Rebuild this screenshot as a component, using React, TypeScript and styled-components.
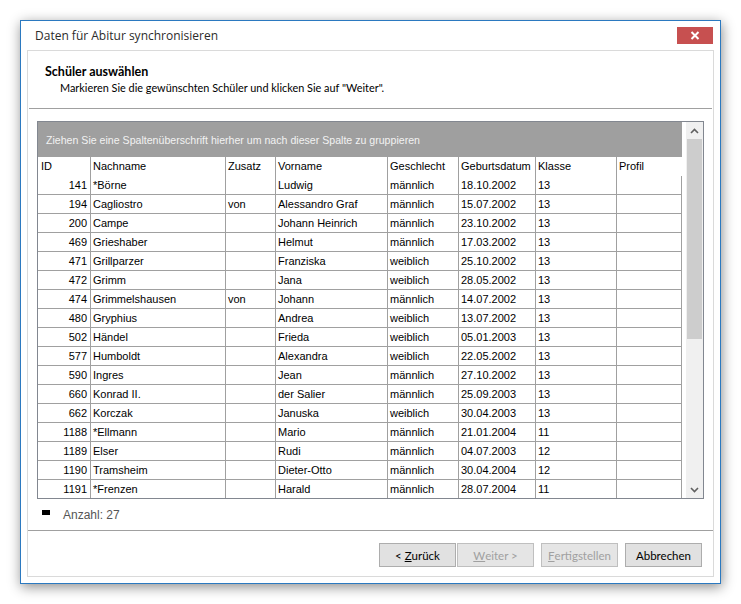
import React from "react";
import styled, { createGlobalStyle } from "styled-components";

const Global = createGlobalStyle`
  html, body { margin: 0; padding: 0; background: #ffffff; }
  body { width: 741px; height: 604px; overflow: hidden; }
`;

const UI = `"Open Sans", "Noto Sans", sans-serif`;
const UI2 = `Lato, "Open Sans", sans-serif`;
const GRIDFONT = `"Liberation Sans", Arial, sans-serif`;

const Page = styled.div`
  padding: 20px 0 0 20px;
`;

const Window = styled.div`
  width: 701px;
  height: 564px;
  box-sizing: border-box;
  border: 1px solid #2b79c0;
  background: #ffffff;
  box-shadow: 1px 3px 12px rgba(0, 0, 0, 0.45);
  display: flex;
  flex-direction: column;
`;

const TitleBar = styled.div`
  height: 29px;
  display: flex;
  align-items: center;
  justify-content: space-between;
  padding: 0 7px 0 14px;
`;

const Title = styled.div`
  font-family: ${UI};
  font-size: 12px;
  color: #2b2b2b;
`;

const CloseButton = styled.div`
  width: 36px;
  height: 17px;
  margin-top: -1px;
  background: #c75050;
  display: flex;
  align-items: center;
  justify-content: center;
`;

const Panel = styled.div`
  margin: 0 6px;
  height: 527px;
  box-sizing: border-box;
  border: 1px solid #dadada;
  display: flex;
  flex-direction: column;
`;

const HeaderArea = styled.div`
  height: 57px;
  box-sizing: border-box;
  padding: 13px 0 0 17px;
`;

const StepTitle = styled.div`
  font-family: ${UI2};
  font-size: 12.5px;
  font-weight: 700;
  line-height: 16px;
  color: #000;
`;

const StepHint = styled.div`
  font-family: ${UI2};
  font-size: 10.9px;
  line-height: 16px;
  color: #000;
  padding-left: 15px;
`;

const Separator = styled.div<{ $inset?: number }>`
  height: 1px;
  background: #a0a0a0;
  margin: 0 ${(p) => p.$inset ?? 0}px;
`;

const GridBox = styled.div`
  margin: 12px 9px 0 9px;
  height: 378px;
  box-sizing: border-box;
  border: 1px solid #828790;
  display: flex;
  overflow: hidden;
`;

const GridMain = styled.div`
  flex: 1;
  display: flex;
  flex-direction: column;
  overflow: hidden;
`;

const GroupPanel = styled.div`
  height: 35px;
  flex: none;
  background: #9f9f9f;
  color: #f2f2f2;
  font-family: ${GRIDFONT};
  font-size: 10.6px;
  display: flex;
  align-items: center;
  padding-left: 8px;
  width: 648px;
`;

const COLS = "53px 135px 50px 112px 71px 77px 81px 65px";

const Row = styled.div<{ $header?: boolean }>`
  display: grid;
  grid-template-columns: ${COLS};
  height: 19px;
  flex: none;
  box-sizing: border-box;
  border-bottom: ${(p) => (p.$header ? "none" : "1px solid #a0a0a0")};
  width: 644px;
`;

const Cell = styled.div<{ $right?: boolean; $last?: boolean; $header?: boolean }>`
  font-family: ${GRIDFONT};
  font-size: 11px;
  color: #000;
  line-height: 18px;
  white-space: nowrap;
  overflow: hidden;
  box-sizing: border-box;
  border-right: ${(p) => (p.$header && p.$last ? "none" : "1px solid #a0a0a0")};
  text-align: ${(p) => (p.$right ? "right" : "left")};
  padding: ${(p) => (p.$right ? "0 3px 0 0" : "0 0 0 2px")};
`;

const HeadLabel = styled.span<{ $first?: boolean }>`
  padding-left: ${(p) => (p.$first ? 1 : 0)}px;
`;

const Scrollbar = styled.div`
  width: 17px;
  flex: none;
  display: flex;
  flex-direction: column;
  background: #f0f0f0;
  margin-left: 4px;
`;

const ScrollArrow = styled.div`
  height: 17px;
  flex: none;
  display: flex;
  align-items: center;
  justify-content: center;
`;

const Thumb = styled.div`
  height: 200px;
  flex: none;
  margin: 0 1px;
  background: #cdcdcd;
`;

const Track = styled.div`
  flex: 1;
`;

const CountRow = styled.div`
  height: 31px;
  display: flex;
  align-items: center;
  padding-left: 14px;
`;

const CountMark = styled.div`
  width: 8px;
  height: 5px;
  background: #000;
  margin-right: 13px;
  margin-top: -4px;
`;

const CountText = styled.div`
  font-family: ${GRIDFONT};
  font-size: 12px;
  color: #555;
`;

const ButtonRow = styled.div`
  height: 45px;
  box-sizing: border-box;
  display: flex;
  justify-content: flex-end;
  padding: 12px 11px 0 0;
`;

const ButtonPair = styled.div`
  display: flex;
  gap: 1px;
  margin-right: 7px;
`;

const Button = styled.div<{ $disabled?: boolean; $gap?: number }>`
  width: 77px;
  height: 24px;
  box-sizing: border-box;
  border: 1px solid ${(p) => (p.$disabled ? "#bfbfbf" : "#adadad")};
  background: ${(p) => (p.$disabled ? "#e5e5e5" : "#e1e1e1")};
  color: ${(p) => (p.$disabled ? "#a0a0a0" : "#000")};
  font-family: ${UI2};
  font-size: 11.5px;
  display: flex;
  align-items: center;
  justify-content: center;
  margin-right: ${(p) => p.$gap ?? 0}px;
`;

const Key = styled.span`
  text-decoration: underline;
`;

type Student = [string, string, string, string, string, string, string];

const students: Student[] = [
  ["141", "*Börne", "", "Ludwig", "männlich", "18.10.2002", "13"],
  ["194", "Cagliostro", "von", "Alessandro Graf", "männlich", "15.07.2002", "13"],
  ["200", "Campe", "", "Johann Heinrich", "männlich", "23.10.2002", "13"],
  ["469", "Grieshaber", "", "Helmut", "männlich", "17.03.2002", "13"],
  ["471", "Grillparzer", "", "Franziska", "weiblich", "25.10.2002", "13"],
  ["472", "Grimm", "", "Jana", "weiblich", "28.05.2002", "13"],
  ["474", "Grimmelshausen", "von", "Johann", "männlich", "14.07.2002", "13"],
  ["480", "Gryphius", "", "Andrea", "weiblich", "13.07.2002", "13"],
  ["502", "Händel", "", "Frieda", "weiblich", "05.01.2003", "13"],
  ["577", "Humboldt", "", "Alexandra", "weiblich", "22.05.2002", "13"],
  ["590", "Ingres", "", "Jean", "männlich", "27.10.2002", "13"],
  ["660", "Konrad II.", "", "der Salier", "männlich", "25.09.2003", "13"],
  ["662", "Korczak", "", "Januska", "weiblich", "30.04.2003", "13"],
  ["1188", "*Ellmann", "", "Mario", "männlich", "21.01.2004", "11"],
  ["1189", "Elser", "", "Rudi", "männlich", "04.07.2003", "12"],
  ["1190", "Tramsheim", "", "Dieter-Otto", "männlich", "30.04.2004", "12"],
  ["1191", "*Frenzen", "", "Harald", "männlich", "28.07.2004", "11"],
];

const headers = ["ID", "Nachname", "Zusatz", "Vorname", "Geschlecht", "Geburtsdatum", "Klasse", "Profil"];

const Chevron = ({ up }: { up?: boolean }) => (
  <svg width="9" height="6" viewBox="0 0 9 6">
    <polyline
      points={up ? "1,5 4.5,1.5 8,5" : "1,1 4.5,4.5 8,1"}
      fill="none"
      stroke="#606060"
      strokeWidth="1.6"
    />
  </svg>
);

export default function App() {
  return (
    <>
      <Global />
      <Page>
        <Window>
          <TitleBar>
            <Title>Daten für Abitur synchronisieren</Title>
            <CloseButton>
              <svg width="10" height="9" viewBox="0 0 10 9">
                <path d="M1.5 1 L8.5 8 M8.5 1 L1.5 8" stroke="#ffffff" strokeWidth="2" fill="none" />
              </svg>
            </CloseButton>
          </TitleBar>
          <Panel>
            <HeaderArea>
              <StepTitle>Schüler auswählen</StepTitle>
              <StepHint>Markieren Sie die gewünschten Schüler und klicken Sie auf "Weiter".</StepHint>
            </HeaderArea>
            <Separator $inset={1} />
            <GridBox>
              <GridMain>
                <GroupPanel>Ziehen Sie eine Spaltenüberschrift hierher um nach dieser Spalte zu gruppieren</GroupPanel>
                <Row $header>
                  {headers.map((h, i) => (
                    <Cell key={h} $header $last={i === headers.length - 1}>
                      <HeadLabel $first={i === 0}>{h}</HeadLabel>
                    </Cell>
                  ))}
                </Row>
                {students.map((s) => (
                  <Row key={s[0]}>
                    <Cell $right>{s[0]}</Cell>
                    <Cell>{s[1]}</Cell>
                    <Cell>{s[2]}</Cell>
                    <Cell>{s[3]}</Cell>
                    <Cell>{s[4]}</Cell>
                    <Cell>{s[5]}</Cell>
                    <Cell>{s[6]}</Cell>
                    <Cell />
                  </Row>
                ))}
              </GridMain>
              <Scrollbar>
                <ScrollArrow>
                  <Chevron up />
                </ScrollArrow>
                <Thumb />
                <Track />
                <ScrollArrow>
                  <Chevron />
                </ScrollArrow>
              </Scrollbar>
            </GridBox>
            <CountRow>
              <CountMark />
              <CountText>Anzahl: 27</CountText>
            </CountRow>
            <Separator />
            <ButtonRow>
              <ButtonPair>
                <Button>
                  &lt;&nbsp;<Key>Z</Key>urück
                </Button>
                <Button $disabled>
                  <Key>W</Key>eiter &gt;
                </Button>
              </ButtonPair>
              <Button $disabled $gap={7}>
                <Key>F</Key>ertigstellen
              </Button>
              <Button>Abbrechen</Button>
            </ButtonRow>
          </Panel>
        </Window>
      </Page>
    </>
  );
}
